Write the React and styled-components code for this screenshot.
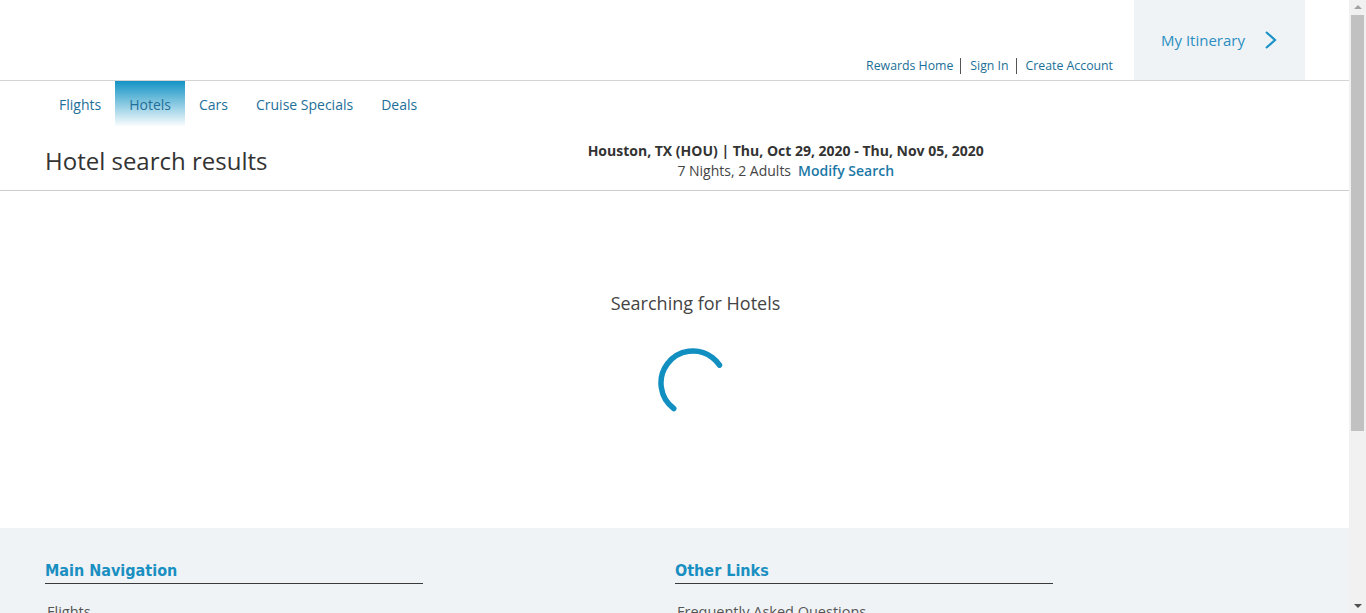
import React from 'react';
import styled, { createGlobalStyle } from 'styled-components';

const GlobalStyle = createGlobalStyle`
  html, body {
    margin: 0;
    padding: 0;
    background: #ffffff;
    font-family: "Open Sans", "Liberation Sans", sans-serif;
    color: #333333;
  }
  body {
    padding-right: 17px;
  }
  * {
    box-sizing: border-box;
  }
`;

const StyledScrollbar = styled.div`
  position: fixed;
  top: 0;
  right: 0;
  width: 17px;
  height: 100vh;
  display: flex;
  flex-direction: column;
  align-items: center;
  background: #f1f1f1;
`;

const StyledScrollArrow = styled.div`
  width: 0;
  height: 0;
  margin: 5px 0;
  border-left: 4px solid transparent;
  border-right: 4px solid transparent;
  border-bottom: ${props => (props.down ? 'none' : '4px solid #a3a3a3')};
  border-top: ${props => (props.down ? '4px solid #505050' : 'none')};
`;

const StyledScrollThumb = styled.div`
  width: 13px;
  height: 416px;
  margin-top: 1px;
  background: #c1c1c1;
`;

const StyledScrollTrack = styled.div`
  flex: 1;
`;

const StyledHeader = styled.header`
  display: flex;
  justify-content: flex-end;
  height: 81px;
  border-bottom: 1px solid #d4d4d4;
  padding-right: 44px;
`;

const StyledTopLinks = styled.div`
  display: flex;
  align-self: flex-end;
  margin-bottom: 6px;
  margin-right: 21px;
`;

const StyledTopLink = styled.a`
  font-size: 12.3px;
  line-height: 16px;
  color: #1b6f97;
  text-decoration: none;
  padding: 0 7px 0 9px;
  border-left: ${props => (props.first ? 'none' : '1px solid #555555')};
  &:last-child {
    padding-right: 0;
  }
`;

const StyledItinerary = styled.a`
  display: flex;
  align-items: center;
  width: 171px;
  height: 80px;
  padding-left: 27px;
  background: #f0f3f6;
  color: #2b8fc1;
  font-size: 15px;
  text-decoration: none;
  svg {
    margin-left: 19px;
  }
`;

const StyledNav = styled.nav`
  display: flex;
  padding-left: 45px;
  height: 46px;
`;

const StyledTab = styled.a`
  display: flex;
  align-items: center;
  padding: 0 14px;
  font-size: 14px;
  color: #1e6f99;
  text-decoration: none;
  background: ${props =>
    props.active ? 'linear-gradient(#1393c4, #ffffff)' : 'transparent'};
`;

const StyledTitleRow = styled.div`
  display: flex;
  align-items: center;
  padding: 4px 45px 0;
  height: 64px;
  border-bottom: 1px solid #cccccc;
`;

const StyledTitle = styled.h1`
  margin: 0;
  font-size: 24px;
  font-weight: 400;
  color: #333333;
`;

const StyledSummary = styled.div`
  flex: 1;
  text-align: center;
  font-size: 14px;
  line-height: 20px;
`;

const StyledSummaryTitle = styled.div`
  font-weight: 700;
  color: #333333;
`;

const StyledSummaryInfo = styled.div`
  color: #444444;
  a {
    margin-left: 7px;
    color: #1b78a6;
    font-weight: 600;
    text-decoration: none;
  }
`;

const StyledLoading = styled.section`
  display: flex;
  flex-direction: column;
  align-items: center;
  height: 337px;
  padding-top: 100px;
`;

const StyledLoadingText = styled.div`
  font-size: 18px;
  line-height: 24px;
  color: #444444;
  margin-bottom: 32px;
  margin-left: 42px;
`;

const StyledSpinner = styled.svg`
  margin-left: 36px;
`;

const StyledFooter = styled.footer`
  display: grid;
  grid-template-columns: 630px 630px;
  background: #f0f3f6;
  padding: 32px 45px 120px;
`;

const StyledFooterColumn = styled.div`
  display: flex;
  flex-direction: column;
`;

const StyledFooterHeading = styled.h3`
  width: 378px;
  margin: 0 0 13px;
  padding-bottom: 1px;
  border-bottom: 1px solid #3a3a3a;
  font-family: "Liberation Sans Narrow", "DejaVu Sans Condensed", "Open Sans", sans-serif;
  font-size: 16px;
  line-height: 22px;
  font-weight: 700;
  color: #1a8fc1;
`;

const StyledFooterLink = styled.a`
  margin-left: 2px;
  font-size: 14.5px;
  line-height: 30px;
  color: #555555;
  text-decoration: none;
`;

const footerColumns = [
  {
    title: 'Main Navigation',
    links: ['Flights', 'Hotels', 'Cars', 'Cruise Specials', 'Deals'],
  },
  {
    title: 'Other Links',
    links: ['Frequently Asked Questions', 'Terms and Conditions', 'Privacy Policy', 'Contact Us'],
  },
];

const tabs = ['Flights', 'Hotels', 'Cars', 'Cruise Specials', 'Deals'];

const Chevron = () => (
  <svg width="14" height="20" viewBox="0 0 14 20">
    <path d="M2 2 L11 10 L2 18" fill="none" stroke="#1b93c6" strokeWidth="2.2" />
  </svg>
);

const Spinner = () => (
  <StyledSpinner width="72" height="72" viewBox="0 0 72 72">
    <circle
      cx="36"
      cy="36"
      r="32"
      fill="none"
      stroke="#118fc0"
      strokeWidth="5.5"
      strokeLinecap="round"
      strokeDasharray="111 200"
      transform="rotate(127 36 36)"
    />
  </StyledSpinner>
);

const Scrollbar = () => (
  <StyledScrollbar>
    <StyledScrollArrow />
    <StyledScrollThumb />
    <StyledScrollTrack />
    <StyledScrollArrow down />
  </StyledScrollbar>
);

const Header = () => (
  <StyledHeader>
    <StyledTopLinks>
      <StyledTopLink first href="#">Rewards Home</StyledTopLink>
      <StyledTopLink href="#">Sign In</StyledTopLink>
      <StyledTopLink href="#">Create Account</StyledTopLink>
    </StyledTopLinks>
    <StyledItinerary href="#">
      My Itinerary
      <Chevron />
    </StyledItinerary>
  </StyledHeader>
);

const Footer = () => (
  <StyledFooter>
    {footerColumns.map(col => (
      <StyledFooterColumn key={col.title}>
        <StyledFooterHeading>{col.title}</StyledFooterHeading>
        {col.links.map(link => (
          <StyledFooterLink key={link} href="#">{link}</StyledFooterLink>
        ))}
      </StyledFooterColumn>
    ))}
  </StyledFooter>
);

const App = () => {
  return (
    <>
      <GlobalStyle />
      <Header />
      <StyledNav>
        {tabs.map(tab => (
          <StyledTab key={tab} href="#" active={tab === 'Hotels' ? 1 : 0}>
            {tab}
          </StyledTab>
        ))}
      </StyledNav>
      <StyledTitleRow>
        <StyledTitle>Hotel search results</StyledTitle>
        <StyledSummary>
          <StyledSummaryTitle>
            Houston, TX (HOU) | Thu, Oct 29, 2020 - Thu, Nov 05, 2020
          </StyledSummaryTitle>
          <StyledSummaryInfo>
            7 Nights, 2 Adults<a href="#">Modify Search</a>
          </StyledSummaryInfo>
        </StyledSummary>
      </StyledTitleRow>
      <StyledLoading>
        <StyledLoadingText>Searching for Hotels</StyledLoadingText>
        <Spinner />
      </StyledLoading>
      <Footer />
      <Scrollbar />
    </>
  );
};

export default App;
